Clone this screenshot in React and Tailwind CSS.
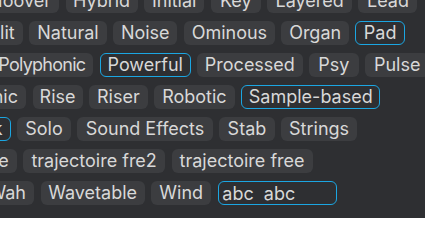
// widths measured off the reference, the first chip of each row is cut by the left edge
const ROWS = [
  { lead: "w-[59px]", tags: [["Hoover"], ["Hybrid", "w-[72px]"], ["Initial", "w-[60px]"], ["Key", "w-[50px]"], ["Layered", "w-[84.5px]"], ["Lead", "w-[59px]"]] },
  { lead: "w-[22.7px]", tags: [["Multi/Split"], ["Natural", "w-[77.4px]"], ["Noise", "w-[64px]"], ["Ominous", "w-[91px]"], ["Organ", "w-[67.4px]"], ["Pad", "w-[49.4px]"]] },
  { lead: "w-[93.3px] tracking-[-0.75px]", tags: [["Polyphonic"], ["Powerful", "w-[90.7px]"], ["Processed", "w-[105.4px]"], ["Psy", "w-[49.4px]"], ["Pulse", "w-[64px]"]] },
  { lead: "w-[26px]", tags: [["Harmonic"], ["Rise", "w-[50px]"], ["Riser", "w-[58.4px]"], ["Robotic", "w-[80.5px]"], ["Sample-based", "w-[139px]"]] },
  { lead: "w-[10.7px]", tags: [["Slow Attack"], ["Solo", "w-[53.4px]"], ["Sound Effects", "w-[135.4px]"], ["Stab", "w-[55.4px]"], ["Strings", "w-[75.7px]"]] },
  { lead: "w-[16.7px]", tags: [["Texture"], ["trajectoire fre2", "w-[141.7px]"], ["trajectoire free", "w-[141px]"]] },
  { lead: "w-[34px]", tags: [["Wah"], ["Wavetable", "w-[104px]"], ["Wind", "w-[60px]"]], input: "abc  abc" },
];

const SELECTED = ["Pad", "Powerful", "Sample-based", "Slow Attack"];

function Tag({ label, w }) {
  const on = SELECTED.includes(label);
  return (
    <span
      className={`inline-flex h-6 shrink-0 items-center justify-center whitespace-nowrap rounded-[6px] border-[1.5px] text-[18px] leading-none ${
        w || "px-[7px]"
      } ${on ? "border-[#1ba6e2] bg-transparent" : "border-transparent bg-[#3c3d40]"}`}
    >
      {label}
    </span>
  );
}

export default function App() {
  return (
    <div
      className="h-[218px] w-[425px] overflow-hidden bg-[#2e2f32] text-[#d8d8d8]"
      style={{ fontFamily: "Inter, 'Noto Sans', sans-serif" }}
    >
      <div className="-mt-[11px] flex flex-col gap-2">
        {ROWS.map((row, i) => (
          <div key={i} className="flex gap-[6.6px]">
            <div className={`flex shrink-0 justify-end ${row.lead}`}>
              <Tag label={row.tags[0][0]} />
            </div>
            {row.tags.slice(1).map(([t, w]) => (
              <Tag key={t} label={t} w={w} />
            ))}
            {row.input && (
              <input
                readOnly
                value={row.input}
                className="h-6 w-[119.7px] shrink-0 rounded-[6px] border-[1.5px] border-[#1ba6e2] bg-transparent px-[3.5px] text-[18px] text-[#d8d8d8] outline-none"
              />
            )}
          </div>
        ))}
      </div>
    </div>
  );
}
